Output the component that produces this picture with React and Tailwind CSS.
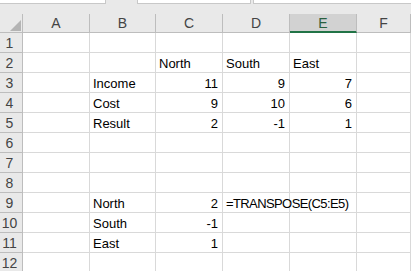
import React from 'react';

const cols = ['A', 'B', 'C', 'D', 'E', 'F'];

// cell values by row number: [A, B, C, D, E, F]
const data = {
    2: ['', '', 'North', 'South', 'East', ''],
    3: ['', 'Income', 11, 9, 7, ''],
    4: ['', 'Cost', 9, 10, 6, ''],
    5: ['', 'Result', 2, -1, 1, ''],
    9: ['', 'North', 2, '=TRANSPOSE(C5:E5)', '', ''],
    10: ['', 'South', -1, '', '', ''],
    11: ['', 'East', 1, '', '', ''],
};

const gridCols = 'grid grid-cols-[23px_67px_66px_67px_67px_67px_1fr]';

const Cell = ({ value }) => {
    const isNum = typeof value === 'number';
    const isFormula = typeof value === 'string' && value.startsWith('=');
    return (
        <div
            className={`h-[20px] border-r border-b border-[#d9d9d9] bg-white flex items-end pb-[2px] whitespace-nowrap overflow-visible ${isNum ? 'justify-end pr-[4px]' : 'justify-start pl-[3px]'}`}
        >
            <span className={`relative z-10 ${isFormula ? 'tracking-[-0.6px]' : ''}`}>{value}</span>
        </div>
    );
};

export default function App() {
    const rows = Array.from({ length: 12 }, (_, i) => i + 1);

    return (
        <div
            className="w-[411px] h-[271px] overflow-hidden bg-[#e9e9e9] text-[13px] leading-none text-black"
            style={{ fontFamily: '"Liberation Sans", Arial, sans-serif' }}
        >
            {/* name box / formula bar strip */}
            <div className="flex h-[4px]">
                <div className="w-[106px] bg-white border-r border-b border-[#c8c8c8]" />
                <div className="w-[31px]" />
                <div className="w-[114px] bg-white border-l border-r border-b border-[#c8c8c8]" />
                <div className="w-[2px]" />
                <div className="flex-1 bg-white border-l border-b border-[#c8c8c8]" />
            </div>
            <div className="h-[10px]" />

            {/* column headers */}
            <div className={gridCols}>
                <div className="h-[19px] border-r border-b border-[#bdbdbd] flex items-end justify-end pr-[1px] pb-[1px]">
                    <svg width="11" height="11" viewBox="0 0 12 12">
                        <polygon points="12,0 12,12 0,12" fill="#b4b4b4" />
                    </svg>
                </div>
                {cols.map((c) => (
                    <div
                        key={c}
                        className={`h-[19px] flex items-center justify-center text-[14px] ${c === 'E' ? 'bg-[#d2d2d2] border-b-2 border-[#217346] text-[#2a6040] border-r border-r-[#bdbdbd]' : 'border-r border-b border-[#bdbdbd] text-[#444]'}`}
                    >
                        {c}
                    </div>
                ))}
            </div>

            {/* rows */}
            {rows.map((r) => {
                const vals = data[r] || ['', '', '', '', '', ''];
                return (
                    <div key={r} className={gridCols}>
                        <div className="h-[20px] border-r border-b border-[#bdbdbd] flex items-center pl-[1px] w-full">
                            <span className="w-[17px] text-center text-[#444] text-[14px]">{r}</span>
                        </div>
                        {vals.map((v, i) => (
                            <Cell key={i} value={v} />
                        ))}
                    </div>
                );
            })}
        </div>
    );
}
